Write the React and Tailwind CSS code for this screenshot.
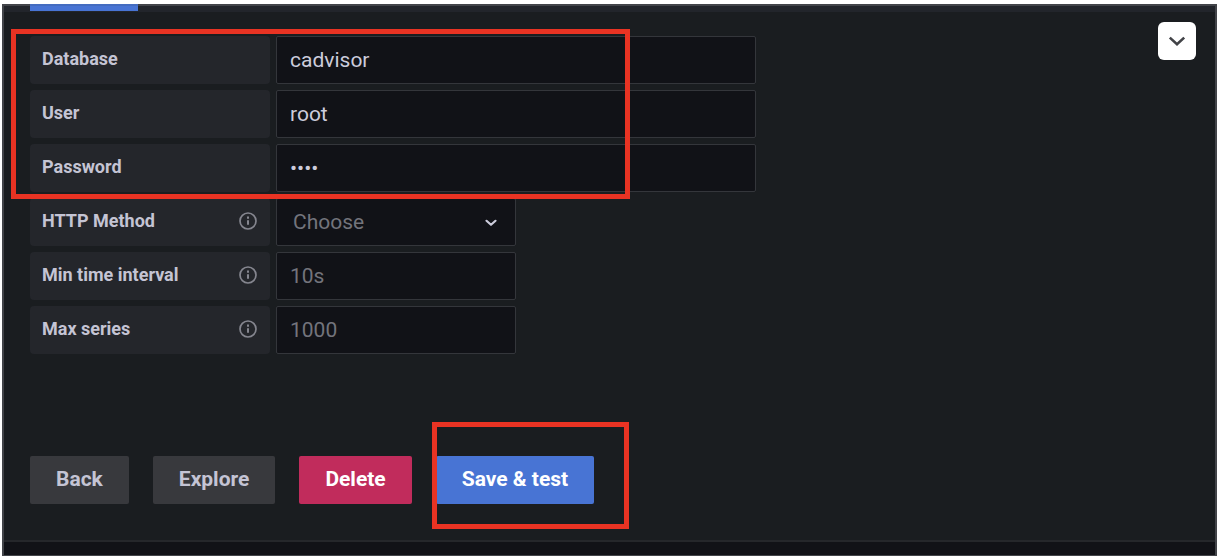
import React from "react";

const labelBox =
  "flex h-12 w-60 shrink-0 items-center justify-between rounded-sm bg-[#24262b] pr-[13px] pl-3 pb-0.5 text-[18px] leading-6 font-bold text-[#c4c4d4]";
const fieldBox =
  "h-12 min-w-0 rounded-xs border border-[#34363b] bg-[#111217] px-[13px] text-[21px] leading-6 outline-none placeholder:text-[#73747c] placeholder:opacity-100";
const buttonBox =
  "h-12 rounded-xs px-[26px] pb-0.5 text-[21px] leading-6 font-bold whitespace-nowrap";

function InfoIcon() {
  return (
    <svg className="size-[18px] text-[#85868f]" viewBox="0 0 18 18" fill="none" aria-hidden="true">
      <circle cx="9" cy="9" r="8" stroke="currentColor" strokeWidth="1.7" />
      <path d="M9 4.600v2.200M9 8.200v4.600" stroke="currentColor" strokeWidth="2" />
    </svg>
  );
}

function Row({ id, label, info, children }) {
  return (
    <div className="flex gap-1.5">
      <label htmlFor={id} className={labelBox}>
        {label}
        {info && <InfoIcon />}
      </label>
      {children}
    </div>
  );
}

export default function App() {
  return (
    <div className="flex min-h-screen bg-white pt-1 pr-[5px] pl-0.5 font-[Roboto,sans-serif]">
      <main className="relative flex flex-1 flex-col border-2 border-[#424449] bg-[#1a1d20]">
        <div className="h-1.5 bg-[#22252b] pl-[26px]">
          <div className="-mt-0.5 h-[7px] w-[108px] border-t-2 border-[#446cc0] bg-[#4874d4]" />
        </div>

        <button
          type="button"
          aria-label="Expand"
          className="absolute top-4 right-[19px] flex size-[38px] items-center justify-center rounded-md bg-white"
        >
          <svg className="size-[18px]" viewBox="0 0 18 18" fill="none" aria-hidden="true">
            <path d="M1.800 5.600l7.200 6.600 7.200-6.600" stroke="#424347" strokeWidth="2.6" />
          </svg>
        </button>

        <form className="flex flex-1 flex-col px-[26px] pt-6 pb-9" onSubmit={(e) => e.preventDefault()}>
          <div className="flex flex-col gap-1.5">
            <div className="relative flex flex-col gap-1.5">
              <Row id="database" label="Database">
                <input id="database" type="text" defaultValue="cadvisor" className={`${fieldBox} w-[480px] text-[#ccccdc]`} />
              </Row>
              <Row id="user" label="User">
                <input id="user" type="text" defaultValue="root" className={`${fieldBox} w-[480px] text-[#ccccdc]`} />
              </Row>
              <Row id="password" label="Password">
                <input id="password" type="password" defaultValue="root" className={`${fieldBox} w-[480px] text-[#ccccdc]`} />
              </Row>
              <div className="pointer-events-none absolute -top-[7px] -left-[19px] z-10 h-[170px] w-[619px] border-5 border-[#e93323]" />
            </div>
            <Row id="method" label="HTTP Method" info>
              <div className="relative flex w-60">
                <select
                  id="method"
                  defaultValue=""
                  className={`${fieldBox} w-full appearance-none pl-4 text-[#73747c]`}
                >
                  <option value="">Choose</option>
                  <option value="GET">GET</option>
                  <option value="POST">POST</option>
                </select>
                <svg
                  className="pointer-events-none absolute top-[18px] right-[18px] size-3.5"
                  viewBox="0 0 14 14"
                  fill="none"
                  aria-hidden="true"
                >
                  <path d="M2.500 4.800L7 8.800l4.500-4" stroke="#ccccdc" strokeWidth="2.200" strokeLinecap="round" strokeLinejoin="round" />
                </svg>
              </div>
            </Row>
            <Row id="interval" label="Min time interval" info>
              <input id="interval" type="text" placeholder="10s" className={`${fieldBox} w-60`} />
            </Row>
            <Row id="series" label="Max series" info>
              <input id="series" type="text" placeholder="1000" className={`${fieldBox} w-60`} />
            </Row>
          </div>

          <div className="mt-[102px] flex gap-6">
            <button type="button" className={`${buttonBox} bg-[#38393d] text-[#c4c4d4]`}>Back</button>
            <button type="button" className={`${buttonBox} bg-[#38393d] text-[#c4c4d4]`}>Explore</button>
            <button type="button" className={`${buttonBox} bg-[#c12c5c] text-white`}>Delete</button>
            <div className="relative">
              <button type="submit" className={`${buttonBox} bg-[#4874d4] text-white`}>Save &amp; test</button>
              <div className="pointer-events-none absolute -top-[34px] -left-1 h-[107px] w-[197px] border-5 border-[#e93323]" />
            </div>
          </div>
        </form>

        <div className="h-[15px] border-t-2 border-[#25272b] bg-[#111217]" />
      </main>
    </div>
  );
}
